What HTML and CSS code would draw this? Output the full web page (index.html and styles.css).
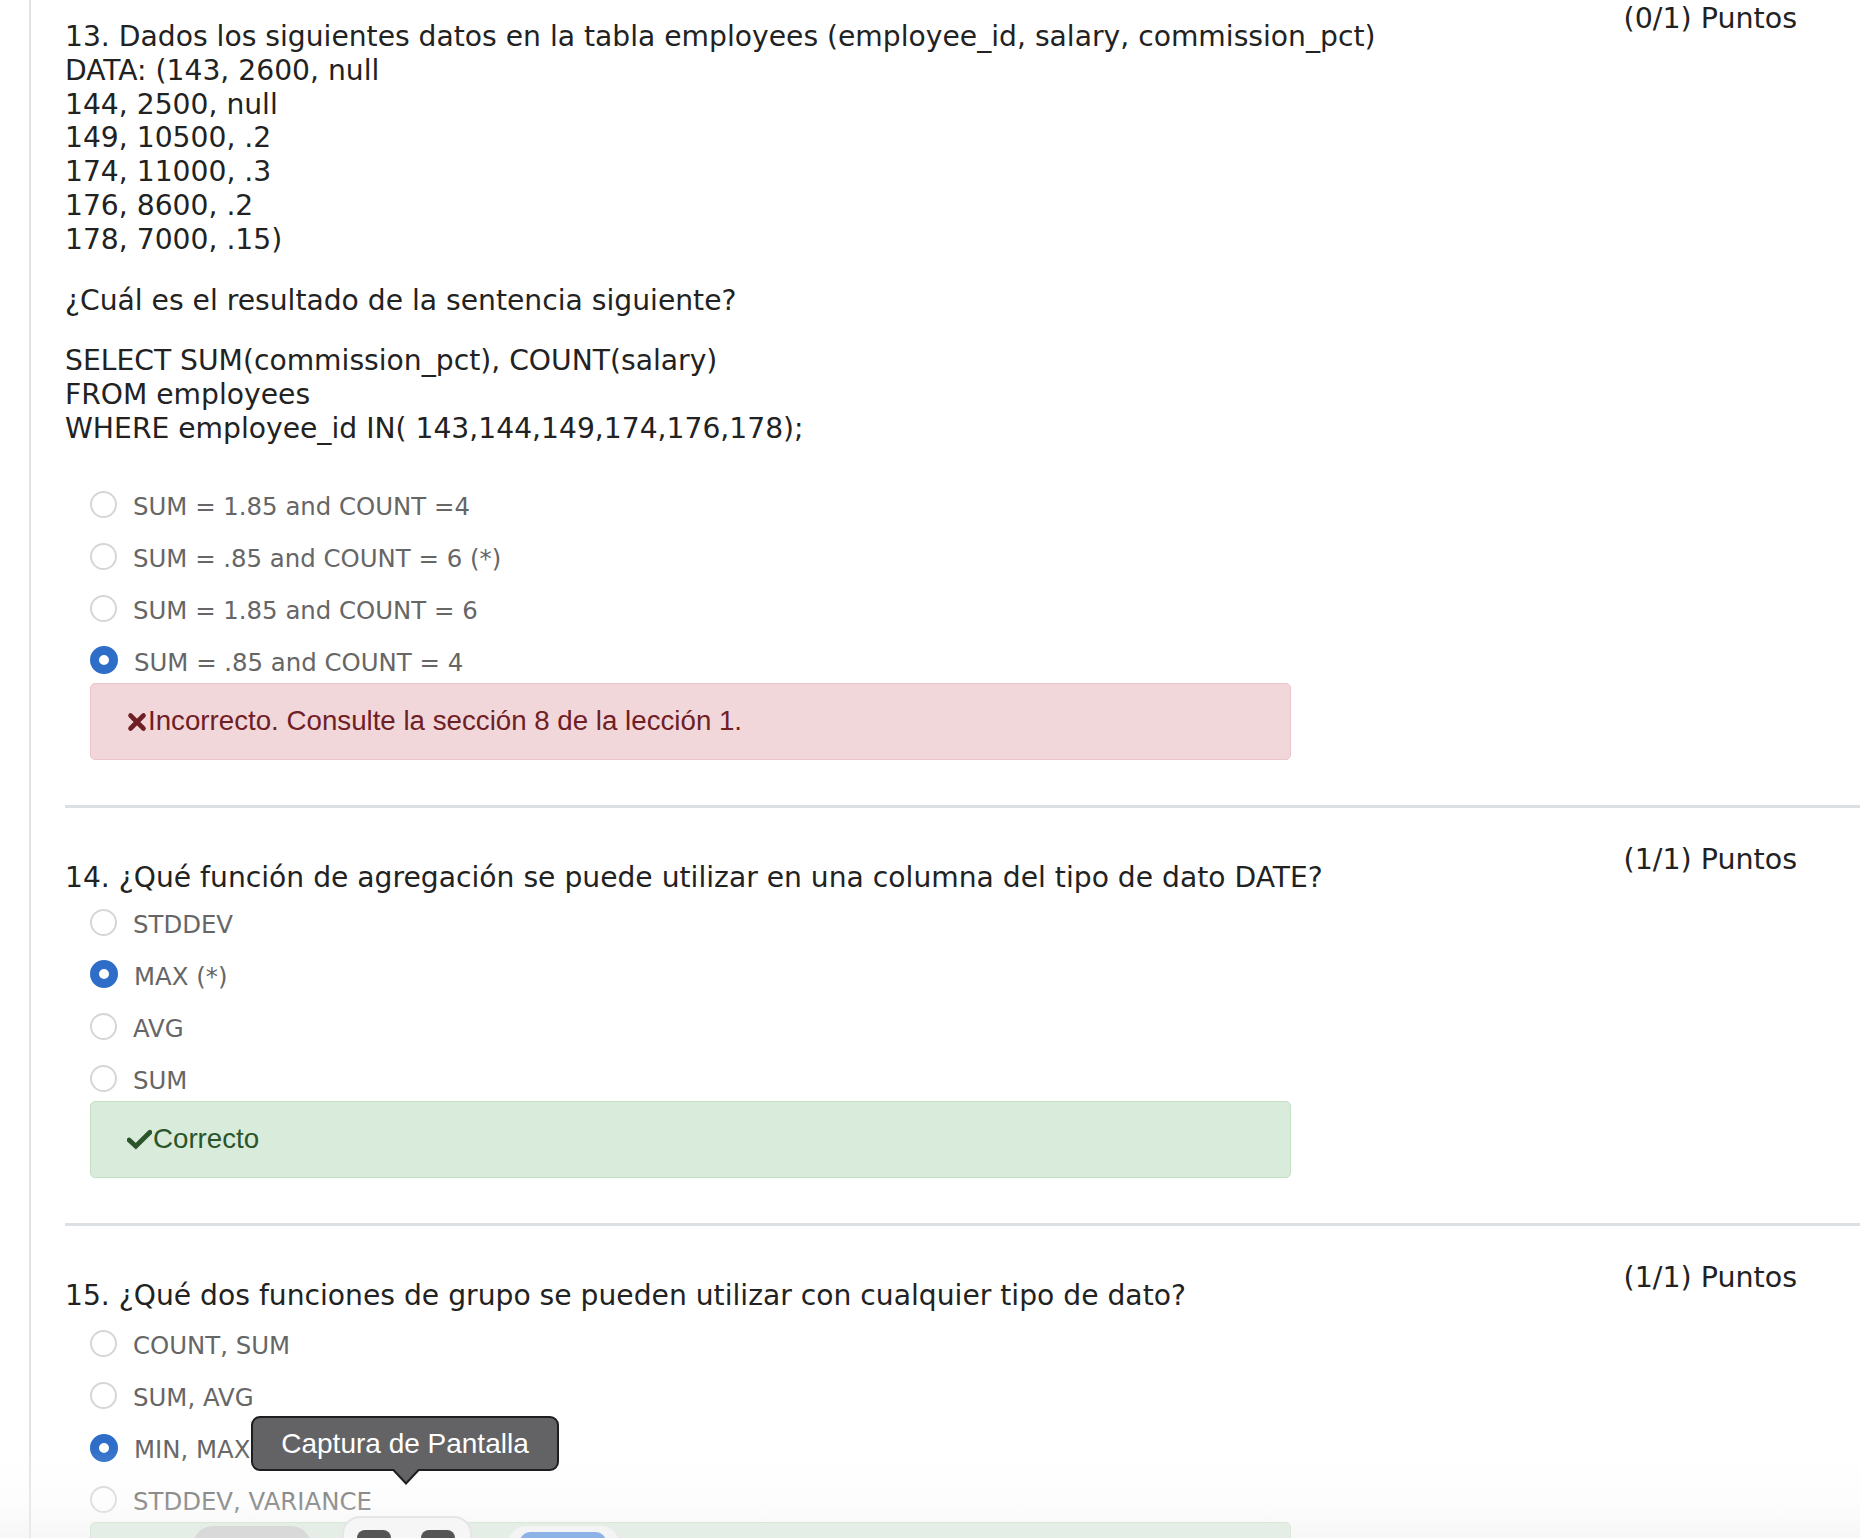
FILE: index.html
```html
<!DOCTYPE html>
<html lang="es">
<head>
<meta charset="utf-8">
<title>Prueba</title>
<link rel="stylesheet" href="styles.css">
</head>
<body>
<div class="page">
  <section class="question first">
    <div class="q-head">
      <div class="q-text">
        <p class="q-para">13. Dados los siguientes datos en la tabla employees (employee_id, salary, commission_pct)<br>DATA: (143, 2600, null<br>144, 2500, null<br>149, 10500, .2<br>174, 11000, .3<br>176, 8600, .2<br>178, 7000, .15)</p>
        <p class="q-para">¿Cuál es el resultado de la sentencia siguiente?</p>
        <p class="q-para last">SELECT SUM(commission_pct), COUNT(salary)<br>FROM employees<br>WHERE employee_id IN( 143,144,149,174,176,178);</p>
      </div>
      <div class="q-points">(0/1) Puntos</div>
    </div>
    <div class="answers">
      <ul class="options">
        <li class="option"><span class="radio"></span><span class="label">SUM = 1.85 and COUNT =4</span></li>
        <li class="option"><span class="radio"></span><span class="label">SUM = .85 and COUNT = 6 (*)</span></li>
        <li class="option"><span class="radio"></span><span class="label">SUM = 1.85 and COUNT = 6</span></li>
        <li class="option"><span class="radio checked"></span><span class="label">SUM = .85 and COUNT = 4</span></li>
      </ul>
      <div class="alert alert-danger"><svg class="ico ico-x" viewBox="0 0 20 20"><path d="M3.5 3.5 L16.5 16.5 M16.5 3.5 L3.5 16.5" /></svg>Incorrecto. Consulte la sección 8 de la lección 1.</div>
    </div>
  </section>

  <section class="question">
    <div class="q-head">
      <div class="q-text">
        <p class="q-para">14. ¿Qué función de agregación se puede utilizar en una columna del tipo de dato DATE?</p>
      </div>
      <div class="q-points">(1/1) Puntos</div>
    </div>
    <div class="answers">
      <ul class="options">
        <li class="option"><span class="radio"></span><span class="label">STDDEV</span></li>
        <li class="option"><span class="radio checked"></span><span class="label">MAX (*)</span></li>
        <li class="option"><span class="radio"></span><span class="label">AVG</span></li>
        <li class="option"><span class="radio"></span><span class="label">SUM</span></li>
      </ul>
      <div class="alert alert-success"><svg class="ico ico-ok" viewBox="0 0 24 20"><path d="M2 10.5 L8.5 16.5 L22 3" /></svg>Correcto</div>
    </div>
  </section>

  <section class="question">
    <div class="q-head">
      <div class="q-text">
        <p class="q-para">15. ¿Qué dos funciones de grupo se pueden utilizar con cualquier tipo de dato?</p>
      </div>
      <div class="q-points">(1/1) Puntos</div>
    </div>
    <div class="answers">
      <ul class="options spaced">
        <li class="option"><span class="radio"></span><span class="label">COUNT, SUM</span></li>
        <li class="option"><span class="radio"></span><span class="label">SUM, AVG</span></li>
        <li class="option"><span class="radio checked"></span><span class="label">MIN, MAX</span></li>
        <li class="option"><span class="radio"></span><span class="label">STDDEV, VARIANCE</span></li>
      </ul>
      <div class="alert alert-success"></div>
    </div>
  </section>
</div>

<div class="tooltip">Captura de Pantalla</div>

<div class="toolbar">
  <span class="tb-item tb-grey"></span>
  <span class="tb-item tb-white"><span class="tb-shape s1"></span><span class="tb-shape s2"></span></span>
  <span class="tb-item tb-blue"><span class="tb-inner"></span></span>
</div>
</body>
</html>
```

FILE: styles.css
```css
html, body {
  margin: 0;
  padding: 0;
  background: #ffffff;
}

body {
  font-family: "DejaVu Sans", Verdana, sans-serif;
  color: #222222;
  height: 1538px;
  overflow: hidden;
  position: relative;
}

.page {
  margin-left: 29px;
  border-left: 2px solid #e3e3e3;
  padding-left: 34px;
  min-height: 1538px;
}

.question {
  padding-top: 35px;
  padding-bottom: 45px;
  border-top: 3px solid #dcdfe4;
}

.question.first {
  padding-top: 2px;
  border-top: none;
}

.q-head {
  display: flex;
  align-items: flex-start;
}

.q-text {
  flex: 1;
  padding-top: 18px;
}

.q-para {
  margin: 0 0 27px 0;
  font-size: 28.2px;
  line-height: 33.8px;
  color: #222222;
}

.q-para.last {
  margin-bottom: 31px;
}

.q-text .q-para:only-child {
  margin-bottom: 0;
}

.q-points {
  flex: none;
  font-size: 28.5px;
  line-height: 34px;
  color: #222222;
  margin-right: 63px;
}

.answers {
  margin-left: 25px;
  width: 1201px;
}

.options {
  list-style: none;
  margin: 10px 0 0 0;
  padding: 0;
}

.options.spaced {
  margin-top: 14px;
}

.option {
  display: flex;
  align-items: center;
  height: 40px;
  margin-bottom: 12px;
}

.option:last-child {
  margin-bottom: 0;
}

.radio {
  box-sizing: border-box;
  width: 27px;
  height: 27px;
  border-radius: 50%;
  border: 2px solid #d6d6d6;
  background: #ffffff;
  margin-right: 16px;
  margin-bottom: 5px;
  flex: none;
}

.radio.checked {
  border: 9.5px solid #2f6ec8;
  width: 28px;
  height: 28px;
}

.label {
  font-size: 24.4px;
  line-height: 40px;
  color: #666666;
}

.alert {
  box-sizing: border-box;
  height: 77px;
  border: 1px solid;
  border-radius: 5px;
  padding: 0 0 0 36px;
  display: flex;
  align-items: center;
  font-family: "Liberation Sans", Arial, Helvetica, sans-serif;
  font-size: 27.7px;
}

.alert-danger {
  background: #f2d7da;
  border-color: #eac5ca;
  color: #6f2025;
}

.alert-success {
  background: #d9ebdb;
  border-color: #c3e0c3;
  color: #2a552a;
}

.ico {
  flex: none;
  fill: none;
  stroke: currentColor;
  stroke-linecap: round;
}

.ico-x {
  width: 20px;
  height: 20px;
  stroke-width: 4.6;
  margin-right: 1px;
  margin-top: 2px;
}

.ico-ok {
  width: 25px;
  height: 21px;
  stroke-width: 4.6;
  margin-right: 1px;
  margin-top: 1px;
}

.tooltip {
  position: absolute;
  left: 251px;
  top: 1416px;
  box-sizing: border-box;
  width: 308px;
  height: 55px;
  background: #636366;
  border: 2px solid #1e1e20;
  border-radius: 9px;
  color: #ffffff;
  font-family: "Liberation Sans", Arial, Helvetica, sans-serif;
  font-size: 28px;
  line-height: 51px;
  text-align: center;
  z-index: 5;
}

.tooltip::before {
  content: "";
  position: absolute;
  left: 138px;
  bottom: -16px;
  border-left: 15px solid transparent;
  border-right: 15px solid transparent;
  border-top: 16px solid #1e1e20;
}

.tooltip::after {
  content: "";
  position: absolute;
  left: 140px;
  bottom: -13px;
  border-left: 13px solid transparent;
  border-right: 13px solid transparent;
  border-top: 14px solid #636366;
}

.toolbar {
  position: absolute;
  left: 0;
  right: 0;
  bottom: 0;
  height: 90px;
  background: linear-gradient(to bottom, rgba(255,255,255,0) 0%, rgba(248,248,248,0.3) 60%, rgba(240,240,240,0.55) 100%);
  z-index: 4;
}

.tb-item {
  position: absolute;
  display: block;
}

.tb-grey {
  left: 193px;
  top: 78px;
  width: 118px;
  height: 40px;
  border-radius: 20px;
  background: #d9d9d9;
}

.tb-white {
  left: 342px;
  top: 68px;
  width: 130px;
  height: 50px;
  border-radius: 18px;
  background: #f6f6f6;
  border: 2px solid #e6e6e6;
  box-sizing: border-box;
}

.tb-shape {
  position: absolute;
  top: 12px;
  width: 34px;
  height: 30px;
  border-radius: 8px;
  background: #555555;
}

.tb-shape.s1 { left: 13px; }
.tb-shape.s2 { left: 77px; }

.tb-blue {
  left: 508px;
  top: 78px;
  width: 111px;
  height: 40px;
  border-radius: 18px;
  background: #f4f4f4;
}

.tb-inner {
  position: absolute;
  left: 12px;
  top: 6px;
  width: 86px;
  height: 30px;
  border-radius: 10px;
  background: #8db2e8;
}
```
